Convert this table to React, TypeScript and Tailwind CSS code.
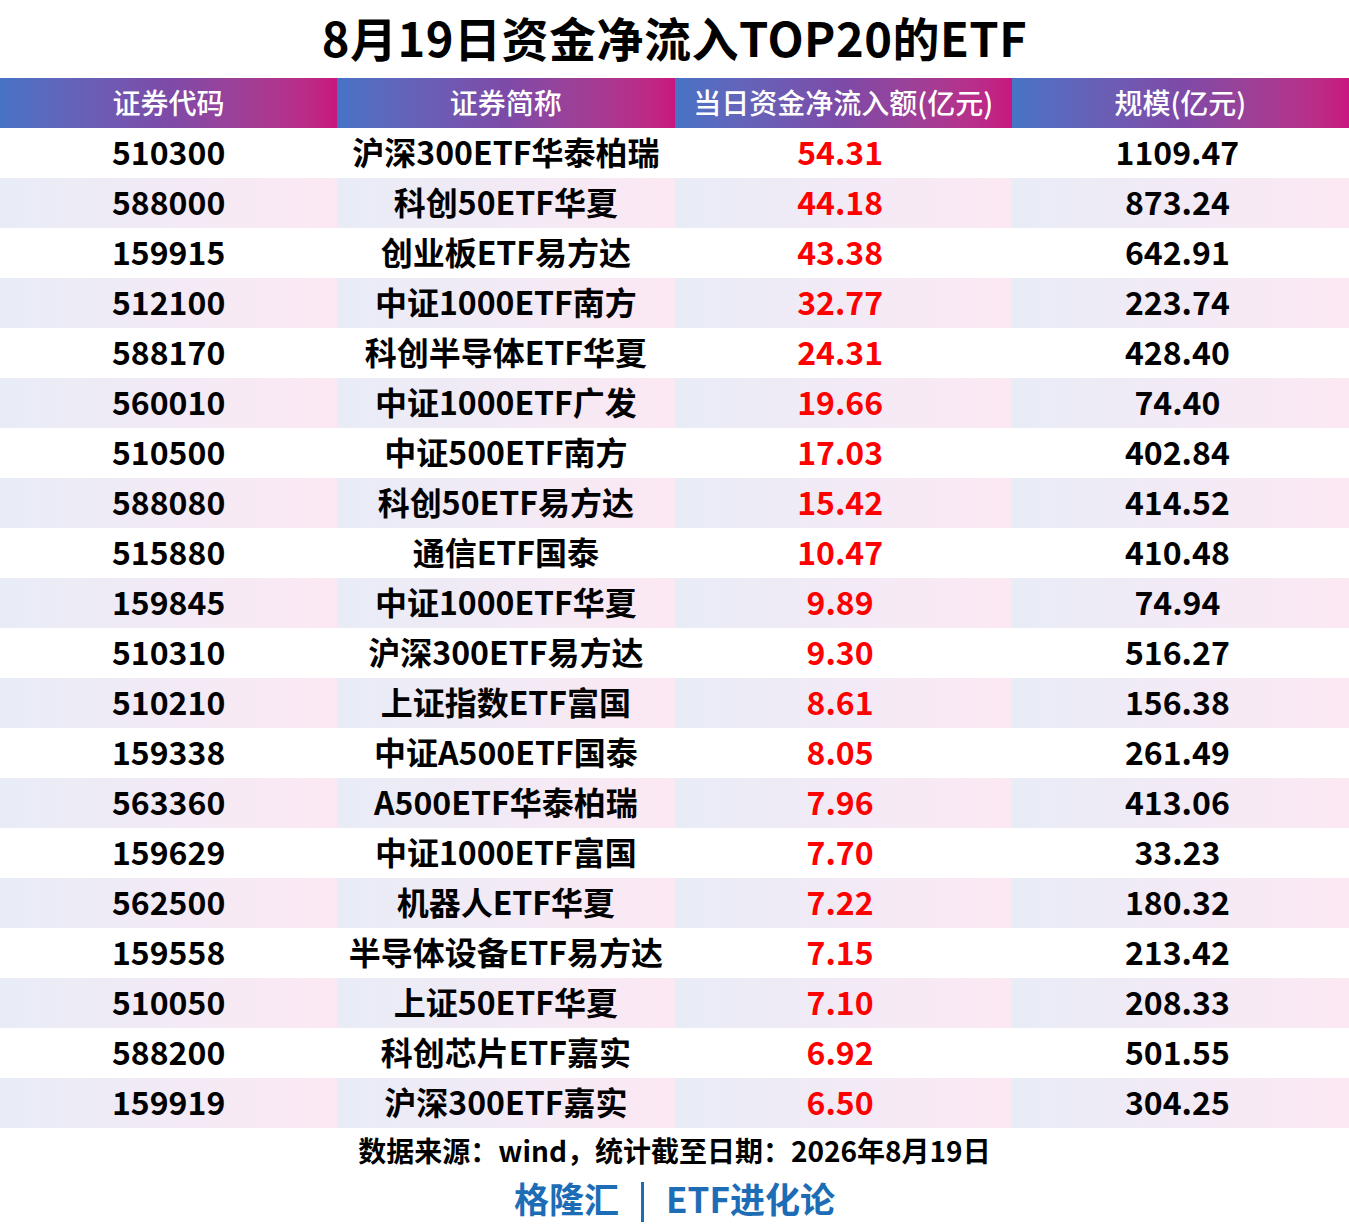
import React from 'react';

const rows: [string, string, string, string][] = [
  ['510300', '沪深300ETF华泰柏瑞', '54.31', '1109.47'],
  ['588000', '科创50ETF华夏', '44.18', '873.24'],
  ['159915', '创业板ETF易方达', '43.38', '642.91'],
  ['512100', '中证1000ETF南方', '32.77', '223.74'],
  ['588170', '科创半导体ETF华夏', '24.31', '428.40'],
  ['560010', '中证1000ETF广发', '19.66', '74.40'],
  ['510500', '中证500ETF南方', '17.03', '402.84'],
  ['588080', '科创50ETF易方达', '15.42', '414.52'],
  ['515880', '通信ETF国泰', '10.47', '410.48'],
  ['159845', '中证1000ETF华夏', '9.89', '74.94'],
  ['510310', '沪深300ETF易方达', '9.30', '516.27'],
  ['510210', '上证指数ETF富国', '8.61', '156.38'],
  ['159338', '中证A500ETF国泰', '8.05', '261.49'],
  ['563360', 'A500ETF华泰柏瑞', '7.96', '413.06'],
  ['159629', '中证1000ETF富国', '7.70', '33.23'],
  ['562500', '机器人ETF华夏', '7.22', '180.32'],
  ['159558', '半导体设备ETF易方达', '7.15', '213.42'],
  ['510050', '上证50ETF华夏', '7.10', '208.33'],
  ['588200', '科创芯片ETF嘉实', '6.92', '501.55'],
  ['159919', '沪深300ETF嘉实', '6.50', '304.25'],
];

const headers = ['证券代码', '证券简称', '当日资金净流入额(亿元)', '规模(亿元)'];

export default function App() {
  return (
    <div className="w-[1349px] h-[1231px] bg-white font-['Noto_Sans_CJK_SC',sans-serif] text-black">
      <h1 className="h-[78px] flex items-center justify-center text-[47px] font-bold tracking-[0.5px] pb-[4px]">
        8月19日资金净流入TOP20的ETF
      </h1>

      <div className="grid grid-cols-4 h-[50px]">
        {headers.map((h) => (
          <div
            key={h}
            className="flex items-center justify-center bg-gradient-to-r from-[#4673c6] via-[#7d4aa8] to-[#c8167f] text-white text-[28px] font-medium pb-[2px]"
          >
            {h}
          </div>
        ))}
      </div>

      {rows.map((r, i) => {
        const stripe = i % 2 === 1;
        const cell = stripe
          ? 'bg-gradient-to-r from-[#e8ecf7] to-[#fce8f3]'
          : 'bg-white';
        return (
          <div key={r[0]} className="grid grid-cols-4 h-[50px] text-[32px] font-bold leading-none">
            <div className={`flex items-center justify-center pb-[4px] ${cell}`}>{r[0]}</div>
            <div className={`flex items-center justify-center pb-[4px] ${cell}`}>{r[1]}</div>
            <div className={`flex items-center justify-center pb-[4px] pr-[6px] text-[#ff0000] ${cell}`}>{r[2]}</div>
            <div className={`flex items-center justify-center pb-[4px] pr-[6px] ${cell}`}>{r[3]}</div>
          </div>
        );
      })}

      <div className="h-[44px] flex items-center justify-center text-[28px] font-bold">
        数据来源：wind，统计截至日期：2026年8月19日
      </div>
      <div className="h-[56px] flex items-center justify-center text-[35px] font-bold text-[#1d6db6] pb-[4px]">
        <span>格隆汇</span>
        <span className="inline-block w-[3px] h-[40px] bg-[#1d6db6] mx-[22px] mt-[8px]"></span>
        <span>ETF进化论</span>
      </div>
    </div>
  );
}
